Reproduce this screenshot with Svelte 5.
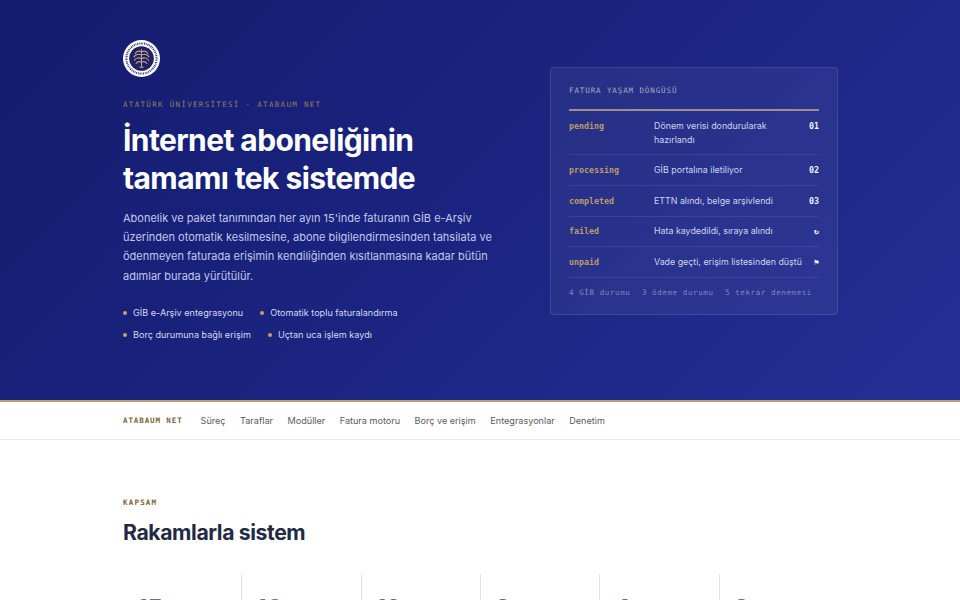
<script>
  const lifecycle = [
    { s: 'pending', d: 'Dönem verisi dondurularak hazırlandı', n: '01' },
    { s: 'processing', d: 'GİB portalına iletiliyor', n: '02' },
    { s: 'completed', d: 'ETTN alındı, belge arşivlendi', n: '03' },
    { s: 'failed', d: 'Hata kaydedildi, sıraya alındı', n: '↻' },
    { s: 'unpaid', d: 'Vade geçti, erişim listesinden düştü', n: '⚑' }
  ];
  const nav = ['Süreç', 'Taraflar', 'Modüller', 'Fatura motoru', 'Borç ve erişim', 'Entegrasyonlar', 'Denetim'];
  const features = ['GİB e-Arşiv entegrasyonu', 'Otomatik toplu faturalandırma', 'Borç durumuna bağlı erişim', 'Uçtan uca işlem kaydı'];
  const stats = ['15', '10', '12', '3', '4', '3'];
</script>

<section class="hero">
  <div class="hero-inner">
    <div class="intro">
      <svg class="seal" viewBox="0 0 36 36" aria-hidden="true">
        <circle cx="18" cy="18" r="18" fill="#fff" />
        <circle cx="18" cy="18" r="14.7" fill="none" stroke="#2a2f78" stroke-width="2" stroke-dasharray="1 .8 .7 .9" />
        <circle cx="18" cy="18" r="12" fill="#1f2260" />
        <path d="M18 9v18M16 26.500h4M18 11.500c-2.500-1.300-5-.4-6.500 1.800M18 11.500c2.500-1.300 5-.4 6.500 1.800M18 14.500c-3-1.300-6-.4-7.500 2.200M18 14.500c3-1.300 6-.4 7.500 2.200M18 18c-3-1.300-6-.4-7 2.200M18 18c3-1.300 6-.4 7 2.200M18 21.500c-2.200-.8-4.500-.4-5.500 1.700M18 21.500c2.200-.8 4.500-.4 5.500 1.700" fill="none" stroke="#c4a58c" stroke-width="1" />
      </svg>
      <p class="eyebrow">ATATÜRK ÜNİVERSİTESİ · ATABAUM NET</p>
      <h1>İnternet aboneliğinin tamamı tek sistemde</h1>
      <p class="lead">Abonelik ve paket tanımından her ayın 15'inde faturanın GİB e-Arşiv üzerinden otomatik kesilmesine, abone bilgilendirmesinden tahsilata ve ödenmeyen faturada erişimin kendiliğinden kısıtlanmasına kadar bütün adımlar burada yürütülür.</p>
      <ul class="features">
        {#each features as f}<li>{f}</li>{/each}
      </ul>
    </div>
    <aside class="panel">
      <div class="panel-title">FATURA YAŞAM DÖNGÜSÜ</div>
      <div class="rows">
        {#each lifecycle as r}
          <div class="row">
            <span class="state">{r.s}</span>
            <span class="desc">{r.d}</span>
            <span class="num">{r.n}</span>
          </div>
        {/each}
      </div>
      <div class="panel-foot">
        <span>4 GİB durumu</span><span>3 ödeme durumu</span><span>5 tekrar denemesi</span>
      </div>
    </aside>
  </div>
</section>

<nav class="nav">
  <div class="nav-inner">
    <span class="brand">ATABAUM NET</span>
    {#each nav as n}<a href="#top">{n}</a>{/each}
  </div>
</nav>

<section class="scope">
  <p class="kicker">KAPSAM</p>
  <h2>Rakamlarla sistem</h2>
  <div class="stats">
    {#each stats as s}<div class="stat"><span>{s}</span></div>{/each}
  </div>
</section>

<style>
  :global(body) {
    margin: 0;
    background: #fff;
    font-family: Inter, "Liberation Sans", sans-serif;
    overflow: hidden;
  }
  .hero {
    height: 400px;
    box-sizing: border-box;
    background: linear-gradient(135deg, #141c6e 0%, #1a237e 45%, #232f94 100%);
    padding-top: 40px;
  }
  .hero-inner {
    width: 715px;
    margin-left: 123px;
    display: flex;
    justify-content: space-between;
    align-items: flex-start;
  }
  .intro { width: 370px; }
  .seal { display: block; width: 37px; height: 37px; }
  .eyebrow {
    margin: 21px 0 0;
    font: 7.5px/14px "DejaVu Sans Mono", monospace;
    letter-spacing: 1.32px;
    color: #8f7f5c;
  }
  h1 {
    margin: 9px 0 0;
    font-size: 30px;
    line-height: 38px;
    font-weight: 700;
    letter-spacing: -0.6px;
    color: #fff;
  }
  .lead {
    margin: 12px 0 0;
    font-size: 11px;
    line-height: 19.2px;
    color: #c3c8ea;
  }
  .features {
    list-style: none;
    margin: 16px 0 0;
    padding: 0;
    display: flex;
    flex-wrap: wrap;
    gap: 0 17px;
    width: 300px;
  }
  .features li {
    font-size: 9.1px;
    line-height: 22px;
    color: #d4d8f2;
    display: flex;
    align-items: center;
    gap: 6px;
  }
  .features li::before {
    content: "";
    width: 4px;
    height: 4px;
    border-radius: 50%;
    background: #c2a26b;
  }
  .panel {
    width: 288px;
    box-sizing: border-box;
    margin-top: 27px;
    padding: 17px 18px 14px;
    background: rgba(255, 255, 255, 0.055);
    border: 1px solid rgba(255, 255, 255, 0.1);
    border-radius: 4px;
  }
  .panel-title {
    font: 7.5px/11px "DejaVu Sans Mono", monospace;
    letter-spacing: 0.9px;
    color: #a6a9c8;
    padding-bottom: 13px;
    border-bottom: 2px solid #9b8f90;
  }
  .row {
    display: grid;
    grid-template-columns: 85px 1fr 15px;
    align-items: start;
    padding: 7.6px 0;
    border-bottom: 1px solid rgba(255, 255, 255, 0.08);
    font-size: 8.85px;
    line-height: 14.4px;
  }
  .row:first-child { padding-bottom: 7px; }
  .state {
    font: 700 8.3px/14.4px "DejaVu Sans Mono", monospace;
    color: #b89b6b;
  }
  .desc { color: #cfd3ee; }
  .num {
    font: 700 8.3px/14.4px "DejaVu Sans Mono", monospace;
    color: #eef0fa;
    text-align: right;
  }
  .panel-foot {
    display: flex;
    gap: 11.5px;
    padding-top: 8px;
    font: 7.5px/14px "DejaVu Sans Mono", monospace;
    letter-spacing: 0.6px;
    color: #7f86c0;
    white-space: nowrap;
  }
  .nav {
    height: 40px;
    box-sizing: border-box;
    background: #fff;
    border-top: 2px solid #b89f78;
    border-bottom: 1px solid #e8e8e8;
  }
  .nav-inner {
    margin-left: 123px;
    height: 100%;
    display: flex;
    align-items: center;
    gap: 14.5px;
  }
  .brand {
    font: 700 7.5px/1 "DejaVu Sans Mono", monospace;
    letter-spacing: 0.9px;
    color: #7a6536;
    margin-right: 3.5px;
  }
  .nav a {
    font-size: 9.1px;
    color: #5a5b60;
    text-decoration: none;
  }
  .scope { padding: 58px 0 0 123px; }
  .kicker {
    margin: 0;
    font: 700 7.5px/10px "DejaVu Sans Mono", monospace;
    letter-spacing: 1.2px;
    color: #7a6536;
  }
  h2 {
    margin: 10px 0 0;
    font-size: 21.2px;
    line-height: 28px;
    font-weight: 700;
    letter-spacing: -0.4px;
    color: #1f2a44;
  }
  .stats {
    margin-top: 28px;
    width: 716px;
    display: grid;
    grid-template-columns: repeat(6, 1fr);
  }
  .stat {
    height: 80px;
    border-right: 1px solid #e2e2e6;
    padding: 20.5px 0 0 14px;
    font-size: 24px;
    line-height: 28px;
    font-weight: 700;
    color: #6a6e85;
  }
  .stat:last-child { border-right: 0; }
</style>
